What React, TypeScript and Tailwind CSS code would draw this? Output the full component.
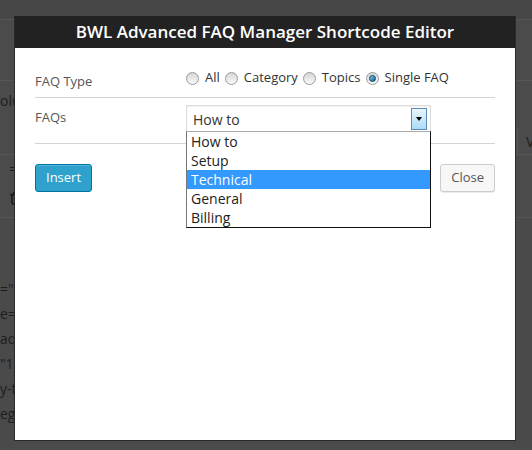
import { Trash2 } from "lucide-react";

const faqOptions = ["How to", "Setup", "Technical", "General", "Billing"];

const faqTypes = [
  { label: "All", checked: false },
  { label: "Category", checked: false },
  { label: "Topics", checked: false },
  { label: "Single FAQ", checked: true },
];

function Radio({ checked }: { checked: boolean }) {
  return (
    <span className="flex h-[13px] w-[13px] shrink-0 items-center justify-center rounded-full border border-[#9a9a9a] bg-gradient-to-b from-[#d6d6d6] to-[#fafafa]">
      {checked ? (
        <span className="h-[7px] w-[7px] rounded-full border border-[#0d3f5e] bg-gradient-to-br from-[#7fd0f5] to-[#0b5f8f]" />
      ) : null}
    </span>
  );
}

function BackgroundPage() {
  // the editor page behind the dialog, dimmed by the overlay
  return (
    <div className="flex h-full flex-col text-[14px] leading-[25px] text-[#1e1e1e]">
      <div className="h-[20px] border-b border-[#565656] bg-[#474747]" />
      <div className="h-[61px] border-b border-[#565656]" />
      <div className="flex h-[74px] items-start justify-between border-b border-[#565656]">
        <span className="mt-[7px] whitespace-nowrap">olumns</span>
        <span className="mt-[46px] flex h-[28px] w-[15px] items-center border-l border-[#575757] pl-[8px]">V</span>
      </div>
      <div className="flex h-[63px] flex-col items-start border-b border-[#565656] pl-[9px]">
        <span className="mt-[4px] leading-[20px]">=</span>
        <Trash2 className="mt-[12px] size-[14px] text-[#1c1c1c]" strokeWidth={3} />
      </div>
      <div className="flex flex-1 flex-col bg-[#4a4a4a] pt-[58px]">
        {['=" type', 'e="1"', "aq_cat", '"1"', "y-faq", "egory"].map((line) => (
          <span key={line} className="whitespace-nowrap">
            {line}
          </span>
        ))}
      </div>
    </div>
  );
}

function ShortcodeModal() {
  return (
    <div className="absolute left-[14px] top-[16px] flex h-[425px] w-[502px] flex-col border-x border-b border-[#2a2a2a] bg-white">
      <div className="flex h-[32px] shrink-0 items-center justify-center bg-[#222222] text-[17px] font-semibold text-white">
        BWL Advanced FAQ Manager Shortcode Editor
      </div>

      <div className="px-[20px]">
        <div className="flex items-start border-b border-[#d4d4d4] pb-[6px] pt-[20px]">
          <div className="mt-[3px] w-[151px] text-[13px] leading-[20px] text-[#555]">FAQ Type</div>
          <div className="flex h-[20px] items-center text-[13px] text-[#333]">
            {faqTypes.map((type) => (
              <label key={type.label} className="flex items-center">
                <Radio checked={type.checked} />
                <span className="ml-[6px] mr-[5px]">{type.label}</span>
              </label>
            ))}
          </div>
        </div>

        <div className="flex items-start border-b border-[#d4d4d4] pb-[10px] pt-[7px]">
          <div className="mt-[2px] w-[151px] text-[13px] leading-[20px] text-[#555]">FAQs</div>
          <div className="relative">
            <div className="flex h-[28px] w-[245px] items-center justify-between border border-[#dddddd] bg-white pl-[6px] pr-[3px] shadow-[inset_0_1px_2px_rgba(0,0,0,0.07)]">
              <span className="text-[14px] text-[#333]">How to</span>
              <span className="flex h-[22px] w-[16px] items-center justify-center border border-[#5b8bb5] bg-gradient-to-b from-[#eaf6fd] to-[#a9dbf6]">
                <span className="h-0 w-0 border-x-[3.5px] border-t-[4px] border-x-transparent border-t-black" />
              </span>
            </div>
            <ul className="absolute left-0 top-[26px] z-10 w-[245px] border border-[#111] border-l-[#777] border-t-[#aaa] bg-white">
              {faqOptions.map((option) => (
                <li
                  key={option}
                  className={
                    option === "Technical"
                      ? "h-[19px] bg-[#3399ff] pl-[4px] text-[14px] leading-[19px] text-white"
                      : "h-[19px] pl-[4px] text-[14px] leading-[19px] text-[#222]"
                  }
                >
                  {option}
                </li>
              ))}
            </ul>
          </div>
        </div>

        <div className="flex items-center justify-between pt-[20px]">
          <button className="h-[28px] rounded-[3px] border border-[#0074a2] bg-[#2ea2cc] px-[10px] text-[13px] text-white shadow-[inset_0_1px_0_rgba(120,200,230,0.5)]">
            Insert
          </button>
          <button className="h-[28px] rounded-[3px] border border-[#cccccc] bg-[#f7f7f7] px-[10px] text-[13px] text-[#555] shadow-[0_1px_0_rgba(0,0,0,0.08)]">
            Close
          </button>
        </div>
      </div>
    </div>
  );
}

export default function App() {
  return (
    <div className="relative h-[450px] w-[532px] overflow-hidden bg-[#4b4b4b] font-['Open_Sans',sans-serif]">
      <BackgroundPage />
      <ShortcodeModal />
    </div>
  );
}
